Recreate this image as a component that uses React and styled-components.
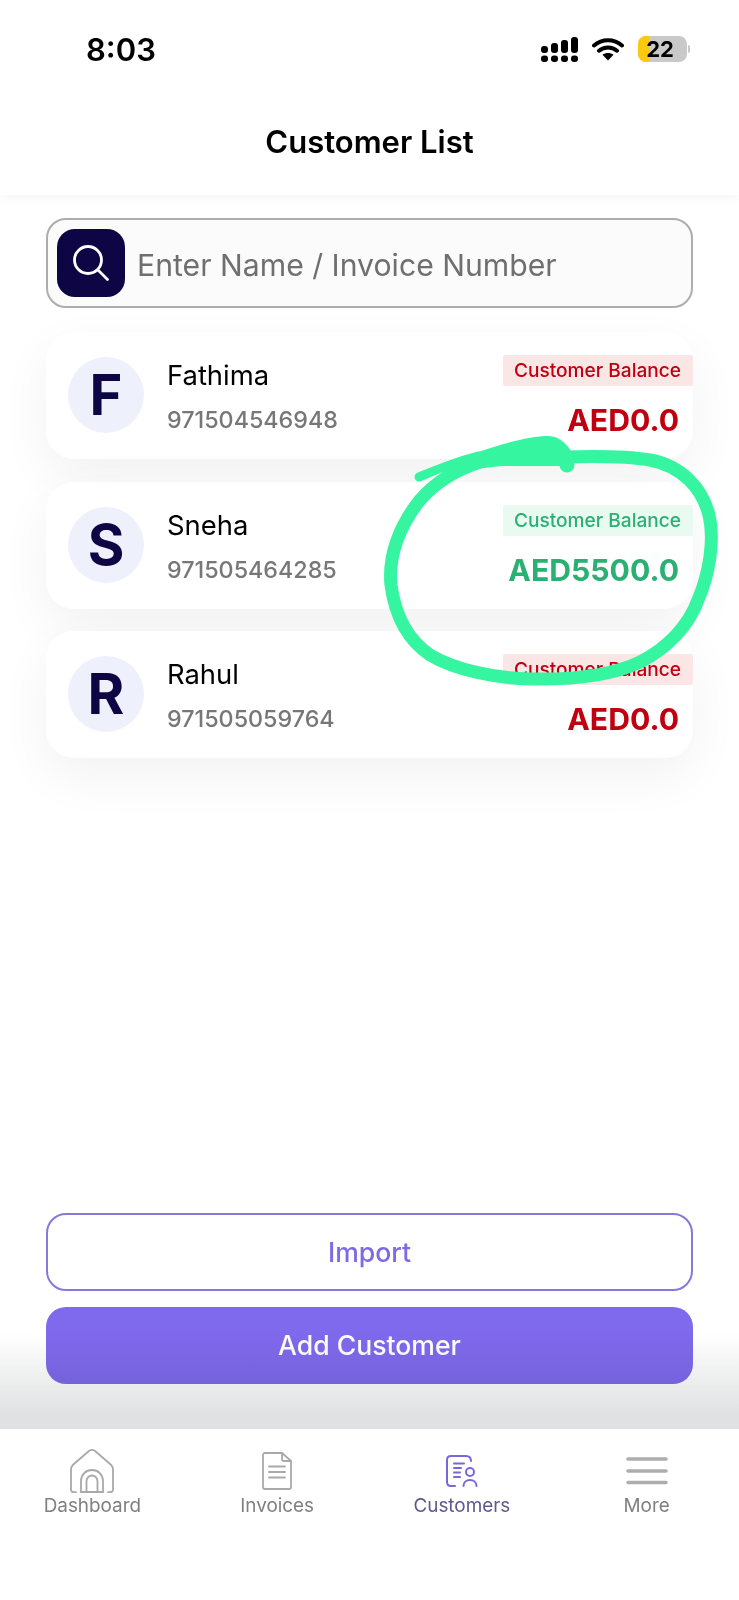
import React from 'react';
import styled, { createGlobalStyle } from 'styled-components';

const customers = [
  { id: 1, name: 'Fathima', phone: '971504546948', balance: 'AED0.0', due: true },
  { id: 2, name: 'Sneha', phone: '971505464285', balance: 'AED5500.0', due: false },
  { id: 3, name: 'Rahul', phone: '971505059764', balance: 'AED0.0', due: true },
];

const HomeIcon = () => (
  <svg width="44" height="44" viewBox="0 0 44 44" fill="none" stroke="#a9a9a9" strokeWidth="1.8" strokeLinecap="round" strokeLinejoin="round">
    <path d="M6 43.2H3.6C1.9 43.2 1 42.2 1 40.6V20.6C1 18.8 1.4 17.6 2.5 16.3L18.6 2.3C20.8 .5 23.2 .5 25.4 2.3L41.5 16.3C42.6 17.6 43 18.8 43 20.6V40.6C43 42.2 42.1 43.2 40.4 43.2H38" />
    <path d="M11 43V32C11 25.5 15.8 21 22 21S33 25.5 33 32V43" />
    <path d="M16.500 43V32.500C16.500 29 19 26.500 22 26.500S27.500 29 27.500 32.500V43" />
    <path d="M11 43H33" />
  </svg>
);

const InvoiceIcon = () => (
  <svg width="30" height="38" viewBox="0 0 30 38" fill="none" stroke="#a9a9a9" strokeWidth="1.8" strokeLinecap="round" strokeLinejoin="round">
    <path d="M20 1H3C1.800 1 1 1.800 1 3V35C1 36.200 1.800 37 3 37H27C28.200 37 29 36.200 29 35V9Z" />
    <path d="M20 1V7C20 8.200 20.800 9 22 9H29" />
    <path d="M7 14.500H23M7 20H23M7 25.500H23" />
  </svg>
);

const CustomerIcon = () => (
  <svg width="32" height="32" viewBox="0 0 32 32" fill="none" stroke="#7b66d8" strokeWidth="2" strokeLinecap="round" strokeLinejoin="round">
    <path d="M9 31H5C2.500 31 1 29.500 1 27V5C1 2.500 2.500 1 5 1H20C23 1 25 3 25 6" />
    <path d="M8 8.500H18M8 13H15M8 17.500H14M8 22H14" />
    <circle cx="24" cy="17" r="4" />
    <path d="M17.500 31C17.500 27.500 20.200 25 24 25S30.500 27.500 30.500 31" />
  </svg>
);

const MoreIcon = () => (
  <svg width="42" height="28" viewBox="0 0 42 28" fill="none" stroke="#adadad" strokeWidth="3.6" strokeLinecap="round">
    <path d="M2 2H40M2 14H40M2 25.500H40" />
  </svg>
);

const SearchIcon = () => (
  <svg width="38" height="38" viewBox="0 0 38 38" fill="none" stroke="#fff" strokeWidth="2.800" strokeLinecap="round">
    <circle cx="16" cy="16" r="13.500" />
    <path d="M26 26L35.500 35.500" />
  </svg>
);

const navItems = [
  { label: 'Dashboard', icon: <HomeIcon /> },
  { label: 'Invoices', icon: <InvoiceIcon /> },
  { label: 'Customers', icon: <CustomerIcon />, active: true },
  { label: 'More', icon: <MoreIcon /> },
];

function App() {
  return (
    <Page>
      <GlobalStyle />
      <Header>
        <StatusBar>
          <Time>8:03</Time>
          <StatusIcons>
            <svg width="37" height="25" viewBox="0 0 37 25" fill="#000">
              <rect x="0" y="18.500" width="7" height="6.500" rx="3" />
              <rect x="10" y="18.500" width="7" height="6.500" rx="3" />
              <rect x="20" y="18.500" width="7" height="6.500" rx="3" />
              <rect x="30" y="18.500" width="7" height="6.500" rx="3" />
              <rect x="0" y="9" width="7" height="7" rx="3" />
              <rect x="10" y="6" width="7" height="10" rx="3" />
              <rect x="20" y="3" width="7" height="13" rx="3" />
              <rect x="30" y="0" width="7" height="16" rx="3" />
            </svg>
            <svg width="32" height="23" viewBox="0 0 32 23">
              <path d="M2 7.500C10 .500 22 .500 30 7.500M7 12.700C12 8.300 20 8.300 25 12.700" fill="none" stroke="#000" strokeWidth="4" strokeLinecap="round" />
              <path d="M10.500 16.800C13.500 14.300 18.500 14.300 21.500 16.800L16 22.500Z" fill="#000" />
            </svg>
            <Battery>
              <BatteryLevel />
              <BatteryText>22</BatteryText>
              <BatteryNub />
            </Battery>
          </StatusIcons>
        </StatusBar>
        <Title>Customer List</Title>
      </Header>

      <Content>
        <SearchBar>
          <SearchButton>
            <SearchIcon />
          </SearchButton>
          <SearchInput placeholder="Enter Name / Invoice Number" />
        </SearchBar>

        <List>
          {customers.map((customer) => (
            <Card key={customer.id}>
              <Avatar>{customer.name[0]}</Avatar>
              <Info>
                <Name>{customer.name}</Name>
                <Phone>{customer.phone}</Phone>
              </Info>
              <BalanceColumn>
                <BalanceTag $due={customer.due}>Customer Balance</BalanceTag>
                <Amount $due={customer.due}>{customer.balance}</Amount>
              </BalanceColumn>
            </Card>
          ))}
        </List>

        <Footer>
          <ImportButton>Import</ImportButton>
          <AddButton>Add Customer</AddButton>
        </Footer>
      </Content>

      <BottomNav>
        {navItems.map((item) => (
          <NavItem key={item.label} $active={item.active}>
            <NavIcon>{item.icon}</NavIcon>
            {item.label}
          </NavItem>
        ))}
      </BottomNav>

      {/* hand drawn marker circle on top of the screenshot */}
      <Scribble viewBox="0 0 739 1600">
        <path
          d="M565 457C600 456 625 456 650 460C682 466 702 488 709 515C715 540 709 575 698 600C689 625 668 648 640 662C615 674 580 680 530 679C495 678 455 670 430 655C408 640 395 615 391 585C388 555 400 525 420 500C435 483 455 470 480 462C510 457 540 457 565 457"
          fill="none"
          stroke="#36f5a0"
          strokeWidth="13"
          strokeLinecap="round"
        />
        <path d="M419 477C440 468 455 462 478 456" fill="none" stroke="#36f5a0" strokeWidth="9" strokeLinecap="round" />
        <path d="M470 455C500 444 530 436 548 436C560 436 568 445 574 456L574 466L470 466Z" fill="#36f5a0" />
        <circle cx="567" cy="465" r="7.500" fill="#36f5a0" />
      </Scribble>
    </Page>
  );
}

export default App;

const GlobalStyle = createGlobalStyle`
  html, body {
    margin: 0;
    padding: 0;
    background: #fff;
  }
  * {
    box-sizing: border-box;
  }
`;

const Page = styled.div`
  position: relative;
  width: 739px;
  height: 1600px;
  display: flex;
  flex-direction: column;
  overflow: hidden;
  background: #fff;
  font-family: Inter, 'Liberation Sans', sans-serif;
`;

const Header = styled.div`
  height: 195px;
  flex-shrink: 0;
  background: #fff;
  box-shadow: 0 3px 10px rgba(0, 0, 0, 0.04);
  position: relative;
  z-index: 1;
`;

const StatusBar = styled.div`
  height: 98px;
  padding: 0 52px 0 86px;
  display: flex;
  align-items: center;
  justify-content: space-between;
`;

const Time = styled.div`
  font-size: 31px;
  font-weight: 600;
  color: #000;
`;

const StatusIcons = styled.div`
  display: flex;
  align-items: center;
  gap: 14px;
`;

const Battery = styled.div`
  position: relative;
  width: 49px;
  height: 26px;
  border-radius: 8px;
  background: #c9c9c9;
`;

const BatteryLevel = styled.div`
  width: 11px;
  height: 100%;
  background: #fbc90e;
  border-radius: 8px 0 0 8px;
`;

const BatteryText = styled.span`
  position: absolute;
  left: 7px;
  top: 0;
  width: 30px;
  text-align: center;
  font-size: 22px;
  line-height: 26px;
  font-weight: 700;
  color: #000;
`;

const BatteryNub = styled.div`
  position: absolute;
  right: -3px;
  top: 9px;
  width: 2px;
  height: 8px;
  border-radius: 0 2px 2px 0;
  background: #c9c9c9;
`;

const Title = styled.div`
  margin-top: 21px;
  text-align: center;
  font-size: 31px;
  line-height: 46px;
  font-weight: 600;
  color: #000;
`;

const Content = styled.div`
  flex: 1;
  display: flex;
  flex-direction: column;
  padding-top: 23px;
`;

const SearchBar = styled.div`
  margin: 0 46px;
  height: 90px;
  display: flex;
  align-items: center;
  gap: 12px;
  padding-left: 9px;
  background: #fbfbfb;
  border: 2px solid #adadad;
  border-radius: 20px;
`;

const SearchButton = styled.div`
  width: 68px;
  height: 68px;
  border-radius: 18px;
  background: #0e0544;
  display: flex;
  align-items: center;
  justify-content: center;
`;

const SearchInput = styled.input`
  flex: 1;
  min-width: 0;
  border: 0;
  outline: 0;
  background: transparent;
  font-family: inherit;
  font-size: 30.200px;
  padding: 3px 0 0;
  color: #333;
  &::placeholder {
    color: #6f6f6f;
    opacity: 1;
  }
`;

const List = styled.div`
  margin: 24px 46px 0;
  display: flex;
  flex-direction: column;
  gap: 22.500px;
`;

const Card = styled.div`
  height: 127px;
  display: flex;
  align-items: flex-start;
  background: #fff;
  border-radius: 28px;
  padding: 25px 0 0 22px;
  box-shadow: 0 18px 50px rgba(0, 0, 0, 0.055);
`;

const Avatar = styled.div`
  width: 76px;
  height: 76px;
  flex-shrink: 0;
  border-radius: 50%;
  background: #eef0fc;
  color: #0e0544;
  font-size: 56px;
  font-weight: 700;
  display: flex;
  align-items: center;
  justify-content: center;
`;

const Info = styled.div`
  margin-left: 23px;
  padding-top: 2px;
  display: flex;
  flex-direction: column;
  gap: 14px;
`;

const Name = styled.div`
  font-size: 27.400px;
  line-height: 32px;
  font-weight: 400;
  color: #000;
`;

const Phone = styled.div`
  font-size: 23.300px;
  line-height: 30px;
  font-weight: 500;
  color: #777;
`;

const BalanceColumn = styled.div`
  margin-left: auto;
  margin-top: -2px;
  display: flex;
  flex-direction: column;
  align-items: flex-end;
  gap: 16px;
`;

const BalanceTag = styled.div`
  height: 31px;
  width: 190px;
  padding-left: 11px;
  font-size: 19.100px;
  line-height: 31px;
  font-weight: 500;
  border-radius: 2px;
  white-space: nowrap;
  color: ${(prop) => (prop.$due ? '#c0000f' : '#2bb074')};
  background: ${(prop) => (prop.$due ? '#fbe6e6' : '#e9faf1')};
`;

const Amount = styled.div`
  padding-right: 14px;
  font-size: 30.200px;
  line-height: 36px;
  font-weight: 700;
  color: ${(prop) => (prop.$due ? '#c0000f' : '#2bb074')};
`;

const Footer = styled.div`
  margin-top: auto;
  position: relative;
  padding: 0 46px 45px;
  display: flex;
  flex-direction: column;
  gap: 16px;
  &::after {
    content: '';
    position: absolute;
    left: 0;
    right: 0;
    bottom: 0;
    height: 95px;
    pointer-events: none;
    background: linear-gradient(rgba(224, 225, 226, 0), #e0e1e2 85%);
    mix-blend-mode: multiply;
  }
`;

const ImportButton = styled.button`
  height: 77.500px;
  border-radius: 20px;
  border: 2px solid #8a77dc;
  background: #fff;
  color: #7f6ae6;
  font-family: inherit;
  font-size: 26.600px;
  font-weight: 500;
`;

const AddButton = styled.button`
  height: 77.500px;
  border-radius: 20px;
  border: 0;
  background: #7f69ec;
  color: #fff;
  font-family: inherit;
  font-size: 26.600px;
  font-weight: 500;
`;

const BottomNav = styled.div`
  height: 171px;
  flex-shrink: 0;
  display: grid;
  grid-template-columns: repeat(4, 1fr);
  background: #fff;
  padding-top: 20px;
`;

const NavItem = styled.div`
  display: flex;
  flex-direction: column;
  align-items: center;
  gap: 1px;
  font-size: 18.900px;
  line-height: 24px;
  color: ${(prop) => (prop.$active ? '#5f5a8c' : '#808080')};
`;

const NavIcon = styled.div`
  height: 44px;
  display: flex;
  align-items: center;
  justify-content: center;
`;

const Scribble = styled.svg`
  position: absolute;
  left: 0;
  top: 0;
  width: 739px;
  height: 1600px;
  pointer-events: none;
  z-index: 2;
`;
